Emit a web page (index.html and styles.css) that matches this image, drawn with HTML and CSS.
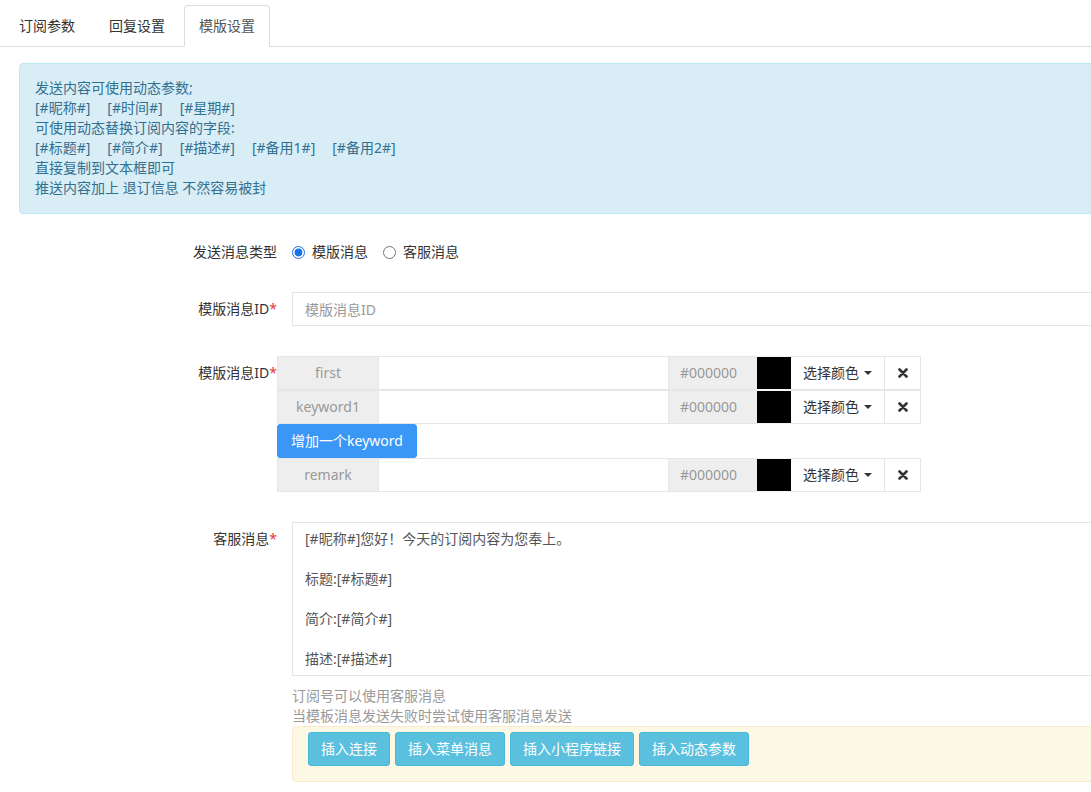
FILE: index.html
```html
<!DOCTYPE html>
<html lang="zh-CN">
<head>
<meta charset="utf-8">
<title>模版设置</title>
<link rel="stylesheet" href="styles.css">
</head>
<body>
<div class="page">
  <ul class="tabs">
    <li class="tab">订阅参数</li>
    <li class="tab">回复设置</li>
    <li class="tab active">模版设置</li>
  </ul>

  <div class="alert">
    <div>发送内容可使用动态参数;</div>
    <div class="tokens"><span>[#昵称#]</span><span>[#时间#]</span><span>[#星期#]</span></div>
    <div>可使用动态替换订阅内容的字段:</div>
    <div class="tokens"><span>[#标题#]</span><span>[#简介#]</span><span>[#描述#]</span><span>[#备用1#]</span><span>[#备用2#]</span></div>
    <div>直接复制到文本框即可</div>
    <div>推送内容加上 退订信息 不然容易被封</div>
  </div>

  <div class="form">
    <div class="row row-type">
      <div class="lbl">发送消息类型</div>
      <div class="ctl radios">
        <label class="radio"><input type="radio" name="t" checked><span>模版消息</span></label>
        <label class="radio"><input type="radio" name="t"><span>客服消息</span></label>
      </div>
    </div>

    <div class="row row-id">
      <div class="lbl">模版消息ID<span class="req">*</span></div>
      <div class="ctl"><input class="text-input" type="text" placeholder="模版消息ID"></div>
    </div>

    <div class="row row-kw">
      <div class="lbl">模版消息ID<span class="req">*</span></div>
      <div class="ctl kw-table">
        <div class="kw-row">
          <div class="kw-name">first</div>
          <div class="kw-input"></div>
          <div class="kw-hex">#000000</div>
          <div class="kw-swatch"></div>
          <div class="kw-pick">选择颜色<span class="caret"></span></div>
          <div class="kw-del"><svg width="10" height="10" viewBox="0 0 10 10"><path d="M1.5 1.5L8.5 8.5M8.5 1.5L1.5 8.5" stroke="#333" stroke-width="2.6" stroke-linecap="round"/></svg></div>
        </div>
        <div class="kw-row">
          <div class="kw-name">keyword1</div>
          <div class="kw-input"></div>
          <div class="kw-hex">#000000</div>
          <div class="kw-swatch"></div>
          <div class="kw-pick">选择颜色<span class="caret"></span></div>
          <div class="kw-del"><svg width="10" height="10" viewBox="0 0 10 10"><path d="M1.5 1.5L8.5 8.5M8.5 1.5L1.5 8.5" stroke="#333" stroke-width="2.6" stroke-linecap="round"/></svg></div>
        </div>
        <div class="kw-add-row"><button class="btn-add">增加一个keyword</button></div>
        <div class="kw-row">
          <div class="kw-name">remark</div>
          <div class="kw-input"></div>
          <div class="kw-hex">#000000</div>
          <div class="kw-swatch"></div>
          <div class="kw-pick">选择颜色<span class="caret"></span></div>
          <div class="kw-del"><svg width="10" height="10" viewBox="0 0 10 10"><path d="M1.5 1.5L8.5 8.5M8.5 1.5L1.5 8.5" stroke="#333" stroke-width="2.6" stroke-linecap="round"/></svg></div>
        </div>
      </div>
    </div>

    <div class="row row-msg">
      <div class="lbl">客服消息<span class="req">*</span></div>
      <div class="ctl">
        <div class="textarea">[#昵称#]您好！今天的订阅内容为您奉上。

标题:[#标题#]

简介:[#简介#]

描述:[#描述#]</div>
        <div class="help">
          <div>订阅号可以使用客服消息</div>
          <div>当模板消息发送失败时尝试使用客服消息发送</div>
        </div>
        <div class="toolbar">
          <button class="btn-info">插入连接</button>
          <button class="btn-info">插入菜单消息</button>
          <button class="btn-info">插入小程序链接</button>
          <button class="btn-info">插入动态参数</button>
        </div>
      </div>
    </div>
  </div>
</div>
</body>
</html>
```

FILE: styles.css
```css
html, body {
  margin: 0;
  padding: 0;
  background: #fff;
  overflow: hidden;
}
body {
  font-family: "Noto Sans", "Noto Sans CJK SC", sans-serif;
  font-size: 14px;
  line-height: 20px;
  color: #333;
}
.page {
  width: 1091px;
  overflow: hidden;
}

/* tabs */
.tabs {
  list-style: none;
  margin: 0;
  padding: 5px 0 0 4px;
  display: flex;
  gap: 4px;
  border-bottom: 1px solid #ddd;
}
.tab {
  padding: 10px 14px;
  line-height: 20px;
  border: 1px solid transparent;
  border-radius: 4px 4px 0 0;
  margin-bottom: -1px;
  color: #333;
}
.tab.active {
  border-color: #ddd;
  border-bottom-color: #fff;
  background: #fff;
  color: #555;
}

/* alert */
.alert {
  margin: 16px -20px 0 19px;
  padding: 14px 15px 15px;
  background: #d9edf7;
  border: 1px solid #bce8f1;
  border-radius: 4px;
  color: #31708f;
}
.tokens span {
  display: inline-block;
  margin-right: 17px;
}

/* form */
.row {
  display: flex;
  align-items: flex-start;
}
.lbl {
  width: 292px;
  flex: none;
  box-sizing: border-box;
  padding: 7px 15px 0 0;
  text-align: right;
  line-height: 20px;
  color: #333;
}
.req {
  color: #e4393c;
}
.ctl {
  flex: 1;
  margin-right: -20px;
}
.row-type {
  margin-top: 21px;
  height: 34px;
}
.radios {
  display: flex;
  align-items: center;
  height: 34px;
}
.radio {
  display: flex;
  align-items: center;
  margin-right: 15px;
}
.radio input {
  width: 13px;
  height: 13px;
  margin: 0 7px 0 0;
  accent-color: #1a73e8;
}
.row-id {
  margin-top: 23px;
}
.text-input {
  display: block;
  width: 100%;
  height: 34px;
  box-sizing: border-box;
  padding: 6px 12px;
  border: 1px solid #e5e5e5;
  font: inherit;
  color: #555;
  outline: none;
}
.text-input::placeholder {
  color: #999;
}

/* keyword table */
.row-kw {
  margin-top: 30px;
}
.kw-table {
  margin-left: -15px;
}
.kw-row {
  display: flex;
  height: 34px;
  width: 644px;
  box-sizing: border-box;
}
.kw-row > div {
  box-sizing: border-box;
  height: 34px;
  border-top: 1px solid #e6e6e6;
  border-bottom: 1px solid #e6e6e6;
  display: flex;
  align-items: center;
  justify-content: center;
}
.kw-name {
  width: 101px;
  background: #eee;
  color: #999;
  border-left: 1px solid #e6e6e6;
}
.kw-input {
  width: 290px;
  background: #fff;
  border-left: 1px solid #e6e6e6;
}
.kw-row > .kw-hex {
  width: 89px;
  background: #eee;
  color: #999;
  border-left: 1px solid #e6e6e6;
  justify-content: flex-start;
  padding-left: 11px;
}
.kw-row > .kw-swatch {
  width: 34px;
  background: #000;
  border-top-color: #f4f4f4;
  border-bottom-color: #f4f4f4;
}
.kw-pick {
  width: 93px;
  background: #fff;
  color: #333;
}
.caret {
  display: inline-block;
  width: 0;
  height: 0;
  margin-left: 5px;
  border-left: 4px solid transparent;
  border-right: 4px solid transparent;
  border-top: 4px solid #333;
}
.kw-del {
  width: 37px;
  background: #fff;
  border-left: 1px solid #e6e6e6;
  border-right: 1px solid #e6e6e6;
}
.kw-add-row {
  height: 34px;
}
.btn-add {
  height: 34px;
  width: 140px;
  padding: 6px 0;
  border: 1px solid #3a97f6;
  border-radius: 3px;
  background: #3a97f6;
  color: #fff;
  font: inherit;
  line-height: 20px;
}

/* message */
.row-msg {
  margin-top: 30px;
}
.textarea {
  height: 154px;
  box-sizing: border-box;
  padding: 6px 12px;
  border: 1px solid #e5e5e5;
  white-space: pre-line;
  color: #555;
  line-height: 20px;
  overflow: hidden;
}
.help {
  margin-top: 10px;
  color: #999;
}
.toolbar {
  display: flex;
  gap: 5px;
  padding: 5px 15px 15px;
  background: #fcf8e3;
  border: 1px solid #faebcc;
  border-radius: 4px;
}
.btn-info {
  height: 34px;
  padding: 6px 12px;
  background: #5bc0de;
  border: 1px solid #46b8da;
  border-radius: 3px;
  color: #fff;
  font: inherit;
  line-height: 20px;
}
```
